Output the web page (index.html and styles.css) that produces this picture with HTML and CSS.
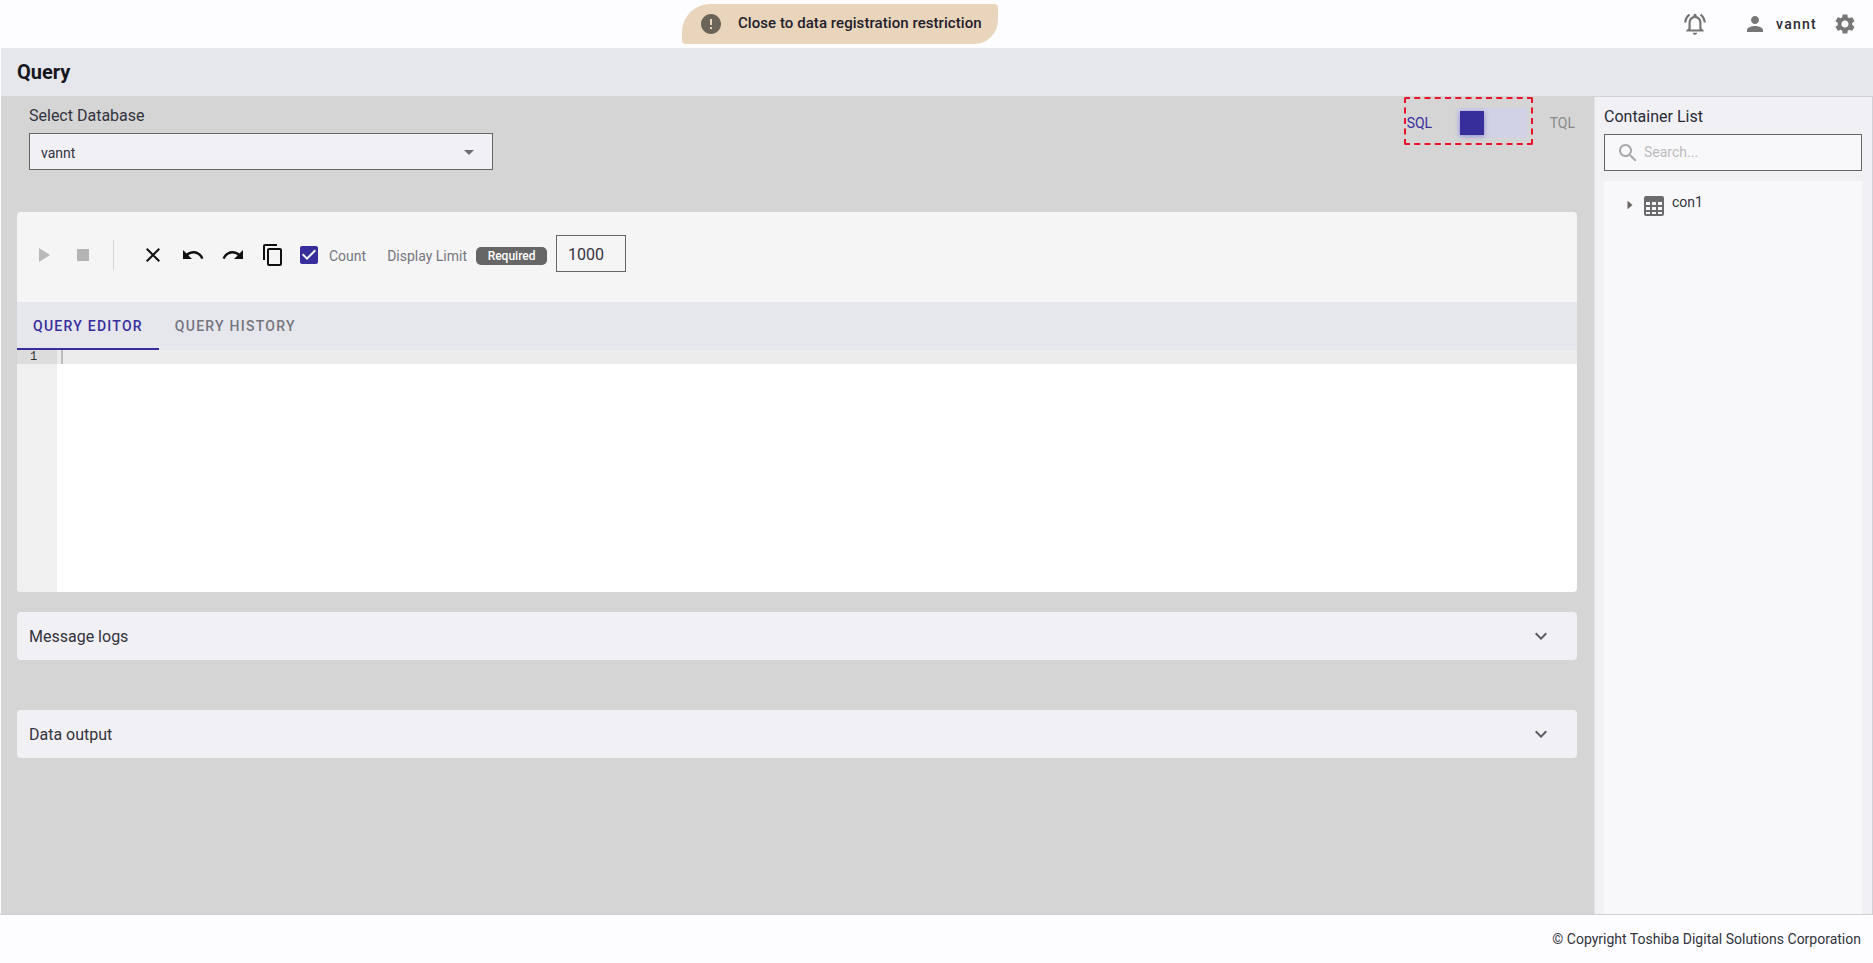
FILE: index.html
```html
<!DOCTYPE html>
<html lang="en">
<head>
<meta charset="utf-8">
<title>Query</title>
<link rel="stylesheet" href="styles.css">
</head>
<body>
<header class="topbar">
  <div class="notice">
    <svg class="notice-icon" viewBox="0 0 24 24"><path d="M12 2C6.48 2 2 6.48 2 12s4.48 10 10 10 10-4.48 10-10S17.52 2 12 2zm1 15h-2v-2h2v2zm0-4h-2V7h2v6z"/></svg>
    <span class="notice-text">Close to data registration restriction</span>
  </div>
  <div class="user-area">
    <svg class="bell" viewBox="0 0 24 24"><path d="M7.58 4.08L6.15 2.65C3.75 4.48 2.17 7.3 2.03 10.5h2c.15-2.65 1.51-4.97 3.55-6.42zm12.39 6.42h2c-.15-3.2-1.73-6.02-4.12-7.85l-1.42 1.43c2.02 1.45 3.39 3.77 3.54 6.42zM18 11c0-3.07-1.64-5.64-4.5-6.32V4c0-.83-.67-1.5-1.5-1.5s-1.5.67-1.5 1.5v.68C7.63 5.36 6 7.92 6 11v5l-2 2v1h16v-1l-2-2v-5zm-2 6H8v-6c0-2.48 1.51-4.5 4-4.5s4 2.02 4 4.5v6zm-4 5c.14 0 .27-.01.4-.04.65-.14 1.18-.58 1.44-1.18.1-.24.15-.5.15-.78h-4c.01 1.1.9 2 2.01 2z"/></svg>
    <svg class="person" viewBox="0 0 24 24"><path d="M12 12c2.21 0 4-1.79 4-4s-1.79-4-4-4-4 1.79-4 4 1.79 4 4 4zm0 2c-2.67 0-8 1.34-8 4v2h16v-2c0-2.66-5.33-4-8-4z"/></svg>
    <span class="username">vannt</span>
    <svg class="gear" viewBox="0 0 24 24"><path d="M19.14 12.94c.04-.3.06-.61.06-.94 0-.32-.02-.64-.07-.94l2.03-1.58c.18-.14.23-.41.12-.61l-1.92-3.32c-.12-.22-.37-.29-.59-.22l-2.39.96c-.5-.38-1.03-.7-1.62-.94l-.36-2.54c-.04-.24-.24-.41-.48-.41h-3.84c-.24 0-.43.17-.47.41l-.36 2.54c-.59.24-1.13.57-1.62.94l-2.39-.96c-.22-.08-.47 0-.59.22L2.74 8.87c-.12.21-.08.47.12.61l2.03 1.58c-.05.3-.09.63-.09.94s.02.64.07.94l-2.03 1.58c-.18.14-.23.41-.12.61l1.92 3.32c.12.22.37.29.59.22l2.39-.96c.5.38 1.03.7 1.62.94l.36 2.54c.05.24.24.41.48.41h3.84c.24 0 .44-.17.47-.41l.36-2.54c.59-.24 1.13-.56 1.62-.94l2.39.96c.22.08.47 0 .59-.22l1.92-3.32c.12-.22.07-.47-.12-.61l-2.01-1.58zM12 15.6c-1.98 0-3.6-1.62-3.6-3.6s1.62-3.6 3.6-3.6 3.6 1.62 3.6 3.6-1.62 3.6-3.6 3.6z"/></svg>
  </div>
</header>

<div class="title-bar"><h1>Query</h1></div>

<div class="content">
  <main class="workspace">
    <section class="top-row">
      <div class="db-select">
        <label class="db-label">Select Database</label>
        <div class="select-box">
          <span>vannt</span>
          <svg class="caret" viewBox="0 0 24 24"><path d="M7 10l5 5 5-5z"/></svg>
        </div>
      </div>
      <div class="mode-switch">
        <div class="dashed">
          <span class="mode-sql">SQL</span>
          <div class="track"><div class="thumb"></div></div>
        </div>
        <span class="mode-tql">TQL</span>
      </div>
    </section>

    <section class="editor-card">
      <div class="toolbar">
        <svg class="tool tool-play" viewBox="0 0 24 24"><path d="M8 5v14l11-7z"/></svg>
        <svg class="tool tool-stop" viewBox="0 0 24 24"><path d="M6 6h12v12H6z"/></svg>
        <span class="divider"></span>
        <svg class="tool tool-close" viewBox="0 0 24 24"><path d="M19 6.41L17.59 5 12 10.59 6.41 5 5 6.41 10.59 12 5 17.59 6.41 19 12 13.41 17.59 19 19 17.59 13.41 12z"/></svg>
        <svg class="tool tool-undo" viewBox="0 0 24 24"><path d="M12.5 8c-2.65 0-5.05.99-6.9 2.6L2 7v9h9l-3.62-3.62c1.39-1.16 3.16-1.88 5.12-1.88 3.54 0 6.55 2.31 7.6 5.5l2.37-.78C21.08 11.03 17.15 8 12.5 8z"/></svg>
        <svg class="tool tool-redo" viewBox="0 0 24 24"><path d="M18.4 10.6C16.55 8.99 14.15 8 11.5 8c-4.65 0-8.58 3.03-9.96 7.22L3.9 16c1.05-3.19 4.05-5.5 7.6-5.5 1.95 0 3.73.72 5.12 1.88L13 16h9V7l-3.6 3.6z"/></svg>
        <svg class="tool tool-copy" viewBox="0 0 24 24"><path d="M16 1H4c-1.1 0-2 .9-2 2v14h2V3h12V1zm3 4H8c-1.1 0-2 .9-2 2v14c0 1.1.9 2 2 2h11c1.1 0 2-.9 2-2V7c0-1.1-.9-2-2-2zm0 16H8V7h11v14z"/></svg>
        <svg class="tool tool-check" viewBox="0 0 24 24"><path d="M19 3H5c-1.11 0-2 .9-2 2v14c0 1.1.89 2 2 2h14c1.11 0 2-.9 2-2V5c0-1.1-.89-2-2-2zm-9 14l-5-5 1.41-1.41L10 14.17l7.59-7.59L19 8l-9 9z"/></svg>
        <span class="tool-label count-label">Count</span>
        <span class="tool-label limit-label">Display Limit</span>
        <span class="badge">Required</span>
        <div class="limit-input">1000</div>
      </div>
      <div class="tabs">
        <div class="tab tab-active">QUERY EDITOR</div>
        <div class="tab">QUERY HISTORY</div>
      </div>
      <div class="editor">
        <div class="gutter"><div class="line-no">1</div></div>
        <div class="code"><div class="active-line"><span class="cursor"></span></div></div>
      </div>
    </section>

    <section class="accordion accordion-logs">
      <span>Message logs</span>
      <svg class="chevron" viewBox="0 0 24 24"><path d="M16.59 8.59L12 13.17 7.41 8.59 6 10l6 6 6-6z"/></svg>
    </section>
    <section class="accordion accordion-output">
      <span>Data output</span>
      <svg class="chevron" viewBox="0 0 24 24"><path d="M16.59 8.59L12 13.17 7.41 8.59 6 10l6 6 6-6z"/></svg>
    </section>
  </main>

  <aside class="side-panel">
    <div class="side-title">Container List</div>
    <div class="search-box">
      <svg class="search-icon" viewBox="0 0 24 24"><path d="M15.5 14h-.79l-.28-.27C15.41 12.59 16 11.11 16 9.5 16 5.91 13.09 3 9.5 3S3 5.91 3 9.5 5.91 16 9.5 16c1.61 0 3.09-.59 4.23-1.57l.27.28v.79l5 4.99L20.49 19l-4.99-5zm-6 0C7.01 14 5 11.99 5 9.5S7.01 5 9.5 5 14 7.01 14 9.5 11.99 14 9.5 14z"/></svg>
      <span class="search-text">Search...</span>
    </div>
    <div class="tree">
      <div class="tree-row">
        <svg class="tree-arrow" viewBox="0 0 24 24"><path d="M9 17l6-5-6-5z"/></svg>
        <svg class="tree-table" viewBox="0 0 20 20"><path fill-rule="evenodd" d="M2 0h16a2 2 0 0 1 2 2v16a2 2 0 0 1-2 2H2a2 2 0 0 1-2-2V2a2 2 0 0 1 2-2zM2 6v3h4V6zm6 0v3h4V6zm6 0v3h4V6zM2 11v3h4v-3zm6 0v3h4v-3zm6 0v3h4v-3zM2 16v2h4v-2zm6 0v2h4v-2zm6 0v2h4v-2z"/></svg>
        <span class="tree-name">con1</span>
      </div>
    </div>
  </aside>
</div>

<footer class="footer">© Copyright Toshiba Digital Solutions Corporation</footer>
</body>
</html>
```
FILE: styles.css
```css
* { box-sizing: border-box; }
html, body { height: 100%; }
html { overflow: hidden; }
body {
  margin: 0;
  height: 963px;
  overflow: hidden;
  display: flex;
  flex-direction: column;
  font-family: Roboto, "Liberation Sans", sans-serif;
  color: #262630;
  background: #fdfdff;
}
svg { display: block; flex: none; fill: currentColor; }

.topbar {
  height: 48px;
  flex: none;
  display: flex;
  align-items: center;
  justify-content: flex-end;
  position: relative;
  background: #fdfdff;
}
.notice {
  position: absolute;
  left: 682px;
  top: 4px;
  width: 316px;
  height: 40px;
  display: flex;
  align-items: center;
  background: #e8d5bc;
  border-radius: 28px 4px 24px 4px;
  font-size: 15px;
  font-weight: 500;
  color: #24202a;
  padding-left: 17px;
}
.notice-icon { width: 24px; height: 24px; color: #6b6459; margin-right: 15px; }
.notice-text { margin-bottom: 2px; letter-spacing: .06px; }
.user-area { display: flex; align-items: center; height: 48px; padding-right: 16px; color: #777; }
.bell { width: 26px; height: 26px; margin-right: 35px; color: #747474; }
.person { width: 24px; height: 24px; margin-right: 9px; color: #777; }
.username { font-size: 14px; font-weight: 500; letter-spacing: 1.25px; color: #2a2a35; margin-right: 16px; }
.gear { width: 24px; height: 24px; color: #777; }

.title-bar {
  height: 48px;
  flex: none;
  margin-left: 1px;
  padding: 0 0 1px 16px;
  display: flex;
  align-items: center;
  background: #e6e7ec;
}
.title-bar h1 { margin: 0; font-size: 20px; font-weight: 700; color: #16161e; }

.content { flex: 1; display: flex; min-height: 0; border-bottom: 1px solid #d0d0d0; }
.workspace {
  flex: 1;
  min-width: 0;
  margin-left: 1px;
  padding: 0 17px 0 16px;
  background: #d5d5d5;
}
.top-row { height: 116px; display: flex; justify-content: space-between; align-items: flex-start; }
.db-select { margin-left: 12px; padding-top: 8px; width: 464px; }
.db-label { display: block; font-size: 16px; line-height: 24px; color: #33333d; margin-bottom: 5px; }
.select-box {
  height: 37px;
  display: flex;
  align-items: center;
  justify-content: space-between;
  padding: 2px 16px 0 11px;
  border: 1px solid #666;
  background: #f0f0f5;
  font-size: 14px;
  color: #33333d;
}
.caret { width: 24px; height: 24px; margin: -2px -5px 0 0; color: #6d6d75; }

.mode-switch { display: flex; align-items: center; margin: 1px 2px 0 0; font-size: 14px; }
.dashed {
  width: 129px;
  height: 48px;
  display: flex;
  align-items: center;
  justify-content: space-between;
  padding: 3px 4px 0 1px;
  border: 2px dashed #e8142c;
  border-radius: 2px;
}
.mode-sql { color: #372e9c; }
.mode-tql { color: #8a8a8a; margin: 3px 0 0 17px; }
.track { width: 70px; height: 30px; padding: 3px; background: #d2d2e6; }
.thumb { width: 24px; height: 24px; background: #372e9c; box-shadow: 0 1px 5px rgba(55, 46, 156, .45); }

.editor-card { height: 380px; display: flex; flex-direction: column; border-radius: 4px; overflow: hidden; }
.toolbar { height: 90px; flex: none; display: flex; align-items: center; padding-bottom: 4px; background: #f5f5f5; }
.tool { width: 24px; height: 24px; }
.tool-play { margin-left: 14px; color: #b9b9b9; }
.tool-stop { margin-left: 16px; color: #b4b4b4; }
.divider { width: 1px; height: 30px; background: #d4d4d4; margin-left: 18px; }
.tool-close { margin-left: 27px; color: #111; }
.tool-undo { margin-left: 16px; color: #111; }
.tool-redo { margin-left: 16px; color: #111; }
.tool-copy { margin-left: 16px; color: #111; }
.tool-check { margin-left: 12px; color: #372e9c; }
.tool-label { font-size: 14px; color: #75757f; margin-top: 1px; }
.count-label { margin-left: 8px; }
.limit-label { margin-left: 21px; }
.badge {
  margin: 2px 0 0 9px;
  width: 71px;
  height: 18px;
  display: flex;
  align-items: center;
  justify-content: center;
  background: #666;
  color: #fff;
  border-radius: 5px;
  font-size: 12px;
  font-weight: 500;
}
.limit-input {
  margin: 0 0 3px 9px;
  width: 70px;
  height: 37px;
  display: flex;
  align-items: center;
  padding: 2px 0 0 11px;
  border: 1px solid #666;
  font-size: 16px;
  color: #33333d;
}

.tabs { height: 48px; flex: none; display: flex; background: #e6e7ec; }
.tab {
  display: flex;
  align-items: center;
  padding: 0 16px;
  font-size: 14px;
  font-weight: 500;
  letter-spacing: 1.25px;
  color: #75757f;
}
.tab-active { color: #372e9c; box-shadow: inset 0 -2px 0 #372e9c; }

.editor { flex: 1; display: flex; background: #fff; min-height: 0; }
.gutter { width: 40px; flex: none; background: #f0f0f0; }
.line-no {
  height: 14px;
  padding-left: 13px;
  background: #dcdcdc;
  font-family: "Liberation Mono", monospace;
  font-size: 12px;
  line-height: 14px;
  color: #333;
}
.code { flex: 1; min-width: 0; }
.active-line { height: 14px; background: #ececec; padding-left: 4px; }
.cursor { display: block; width: 2px; height: 14px; background: #bbb; }

.accordion {
  height: 48px;
  display: flex;
  align-items: center;
  justify-content: space-between;
  padding: 0 24px 0 12px;
  background: #f0f0f5;
  border-radius: 4px;
  font-size: 16px;
  color: #33333d;
}
.accordion-logs { margin-top: 20px; }
.accordion-output { margin-top: 50px; }
.chevron { width: 24px; height: 24px; color: #5c5c66; }

.side-panel {
  width: 279px;
  flex: none;
  display: flex;
  flex-direction: column;
  padding: 0 10px 0 9px;
  background: #f0f0f5;
  border-top: 1px solid #d2d2d6;
  border-left: 1px solid #e2e2e8;
  border-right: 1px solid #d2d2d6;
}
.side-title { height: 37px; padding-top: 8px; font-size: 16px; line-height: 24px; color: #2a2a35; flex: none; }
.search-box {
  height: 37px;
  flex: none;
  display: flex;
  align-items: center;
  padding-left: 11px;
  border: 1px solid #666;
  background: #f8f8fb;
  font-size: 14px;
  color: #bbb;
}
.search-icon { width: 24px; height: 24px; margin-right: 4px; color: #a8a8a8; }
.search-text { margin-bottom: 2px; }
.tree { flex: 1; margin-top: 10px; background: #f8f8fb; padding-top: 14px; }
.tree-row { display: flex; align-items: flex-start; padding-left: 16px; }
.tree-arrow { width: 20px; height: 20px; color: #6a6560; }
.tree-table { width: 20px; height: 20px; margin-left: 4px; margin-top: 1px; color: #6a6a6f; }
.tree-name { margin: -2px 0 0 8px; font-size: 14px; line-height: 18px; color: #33333d; }

.footer {
  height: 48px;
  flex: none;
  display: flex;
  align-items: center;
  justify-content: flex-end;
  padding-right: 12px;
  font-size: 14px;
  color: #33333d;
  background: #fdfdff;
}
```
